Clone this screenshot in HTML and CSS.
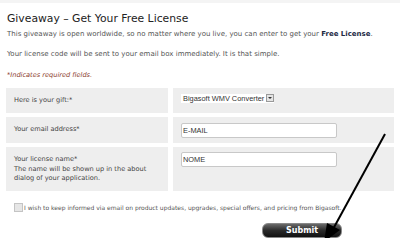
FILE: index.html
```html
<!DOCTYPE html>
<html lang="en">
<head>
  <meta charset="UTF-8">
  <title>Giveaway - Get Your Free License</title>
  <link rel="stylesheet" href="styles.css">
</head>
<body>

<div class="top-band"></div>

<div class="giveaway">
  <h2 class="giveaway-title">Giveaway &ndash; Get Your Free License</h2>
  <p class="intro">This giveaway is open worldwide, so no matter where you live, you can enter to get your <strong>Free License</strong>.</p>
  <p class="intro">Your license code will be sent to your email box immediately. It is that simple.</p>
  <p class="required-note">*Indicates required fields.</p>

  <div class="form-grid">
    <div class="label-cell">Here is your gift:*</div>
    <div class="field-cell">
      <div class="fake-select">
        <span class="select-text">Bigasoft WMV Converter</span>
        <span class="select-btn"><span class="select-caret"></span></span>
      </div>
    </div>

    <div class="label-cell">Your email address*</div>
    <div class="field-cell">
      <input type="text" class="text-input" value="E-MAIL">
    </div>

    <div class="label-cell label-tall">Your license name*<br>The name will be shown up in the about dialog of your application.</div>
    <div class="field-cell field-top">
      <input type="text" class="text-input" value="NOME">
    </div>
  </div>

  <label class="keep-informed">
    <span class="check-box"></span>
    I wish to keep informed via email on product updates, upgrades, special offers, and pricing from Bigasoft.
  </label>

  <div class="submit-row">
    <button class="submit-btn">Submit</button>
  </div>

  <!-- hand drawn arrow pointing at the button -->
  <svg class="arrow" width="80" height="120" viewBox="0 0 80 120">
    <line x1="66" y1="3" x2="13" y2="100" stroke="#000" stroke-width="2" />
    <polygon points="5,111 8,92 21,99" fill="#000" />
  </svg>
</div>

</body>
</html>
```

FILE: styles.css
```css
body {
  margin: 0;
  background-color: #fff;
  font-family: 'DejaVu Sans', Verdana, sans-serif;
  color: #555;
}

.top-band {
  height: 3px;
  background-color: #f4f4f4;
}

.giveaway {
  position: relative;
  padding: 0 6px 0 7px;
  width: 387px;
}

.giveaway-title {
  margin: 8px 0 0;
  font-size: 10.8px;
  font-weight: normal;
  color: #222;
  height: 16px;
  line-height: 16px;
}

.intro {
  margin: 0;
  font-size: 7px;
  line-height: 14px;
}

.intro + .intro {
  margin-top: 6px;
}

.intro strong {
  color: #1d2a44;
}

.required-note {
  margin: 7px 0 0;
  font-size: 6.6px;
  line-height: 14px;
  font-style: italic;
  color: #8a3a2a;
}

.form-grid {
  display: grid;
  grid-template-columns: 162px 221px;
  grid-template-rows: 25px 26px 44px;
  column-gap: 5px;
  row-gap: 4px;
  margin-top: 6px;
  margin-left: -1px;
}

.label-cell,
.field-cell {
  background-color: #eeeeee;
  display: flex;
  align-items: center;
}

.label-cell {
  padding-left: 8px;
  font-size: 6.6px;
  line-height: 9.5px;
  color: #444;
}

.label-tall {
  align-items: flex-start;
  padding-top: 8px;
  padding-right: 10px;
}

.field-cell {
  padding-left: 8px;
}

.field-top {
  align-items: flex-start;
  padding-top: 5px;
}

.fake-select {
  display: flex;
  align-items: center;
  height: 9px;
  margin-top: -5px;
  background-color: #fff;
  font-family: 'Liberation Sans', Arial, sans-serif;
  font-size: 7.4px;
  color: #333;
  padding-left: 2px;
}

.select-text {
  margin-right: 2px;
}

.select-btn {
  width: 8px;
  height: 8px;
  border: 1px solid #999;
  background-color: #e4e4e4;
  box-sizing: border-box;
  display: flex;
  align-items: center;
  justify-content: center;
}

.select-caret {
  border-left: 2px solid transparent;
  border-right: 2px solid transparent;
  border-top: 2px solid #333;
}

.text-input {
  width: 156px;
  height: 15px;
  box-sizing: border-box;
  border: 1px solid #c8c8c8;
  border-radius: 2px;
  background-color: #fff;
  padding: 0 1px;
  font-family: 'Liberation Sans', Arial, sans-serif;
  font-size: 7.4px;
  color: #333;
}

.keep-informed {
  display: flex;
  align-items: center;
  margin-top: 12px;
  padding-left: 7px;
  font-size: 6px;
  color: #555;
  white-space: nowrap;
}

.check-box {
  width: 7px;
  height: 7px;
  border: 1px solid #c4c4c4;
  background-color: #e6e6e6;
  margin-right: 1px;
}

.submit-row {
  display: flex;
  justify-content: flex-end;
  padding-right: 52px;
  margin-top: 11px;
}

.submit-btn {
  width: 80px;
  height: 15px;
  border: 1px solid #888;
  border-radius: 6px;
  background: linear-gradient(#6a6a6a, #2a2a2a 50%, #111);
  color: #fff;
  font-family: 'DejaVu Sans', Verdana, sans-serif;
  font-size: 8px;
  font-weight: bold;
  padding: 0;
  cursor: pointer;
}

.arrow {
  position: absolute;
  left: 319px;
  top: 120px;
}
```
